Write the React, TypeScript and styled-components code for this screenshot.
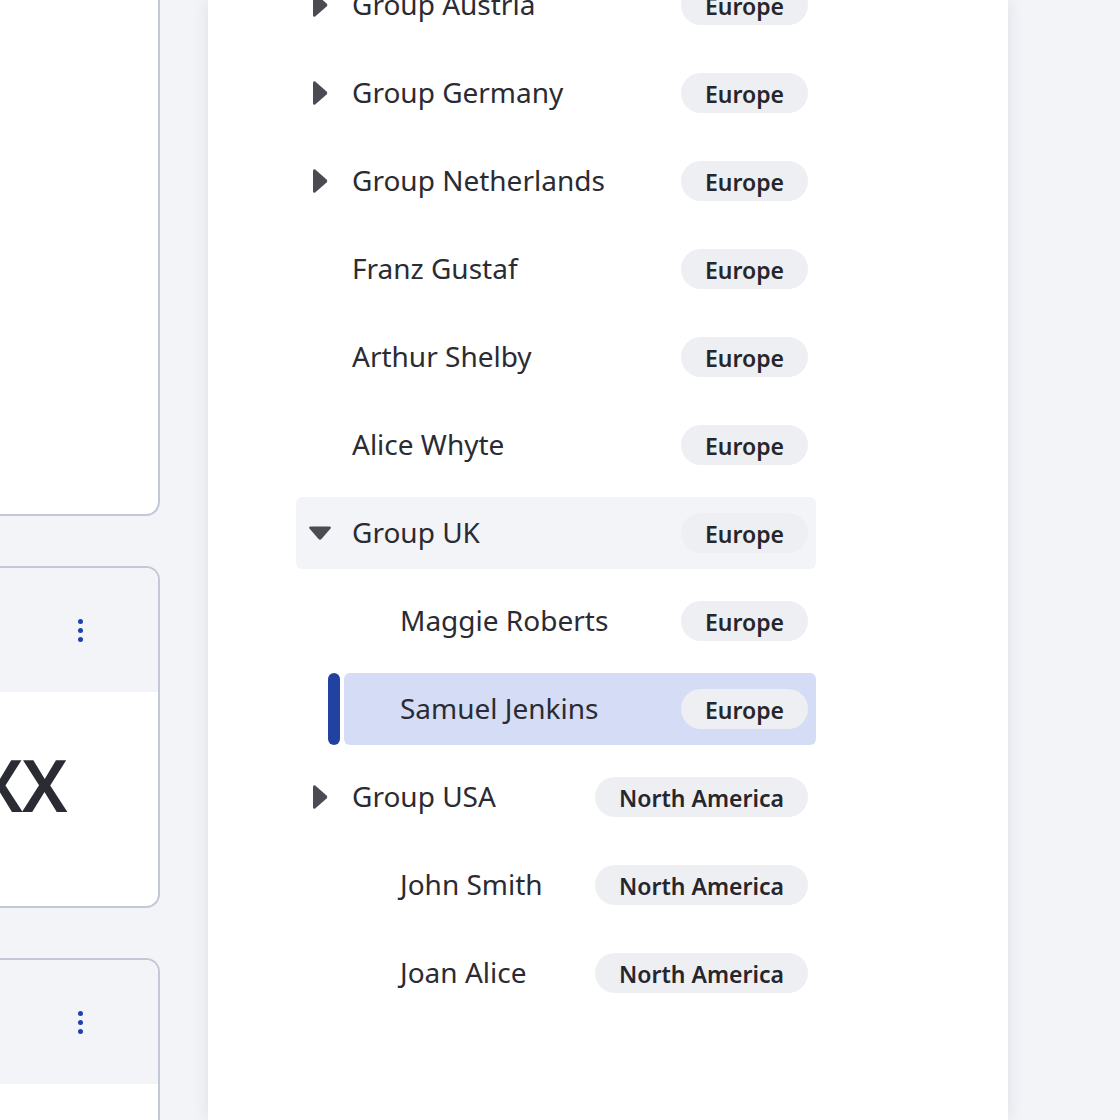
import React from "react";
import styled, { createGlobalStyle } from "styled-components";

const Global = createGlobalStyle`
  html, body { margin: 0; padding: 0; }
  body {
    background: #f3f4f8;
    font-family: "Noto Sans", "Open Sans", sans-serif;
    color: #2b2b33;
    overflow: hidden;
  }
`;

const Page = styled.div`
  display: flex;
  width: 1120px;
  height: 1120px;
  overflow: hidden;
  gap: 48px;
`;

const CardColumn = styled.div`
  display: flex;
  flex-direction: column;
  gap: 50px;
  width: 200px;
  margin-left: -40px;
  flex-shrink: 0;
`;

const Card = styled.div<{ $height: number; $offset?: number }>`
  height: ${(p) => p.$height}px;
  margin-top: ${(p) => p.$offset ?? 0}px;
  border: 2px solid #c3c8d8;
  border-radius: 14px;
  background: #ffffff;
  box-sizing: border-box;
  overflow: hidden;
  display: flex;
  flex-direction: column;
  flex-shrink: 0;
`;

const CardLines = styled.div`
  display: flex;
  flex-direction: column;
  align-items: flex-start;
  padding-top: 185px;
  gap: 44px;
  margin-left: -12px;
  font-size: 27px;
  line-height: 36px;
  color: #2b2b33;
`;

const CardHeader = styled.div`
  height: 124px;
  background: #f3f4f8;
  display: flex;
  align-items: center;
  justify-content: flex-end;
  padding-right: 75px;
  flex-shrink: 0;
`;

const Kebab = styled.div`
  display: flex;
  flex-direction: column;
  gap: 4px;
`;

const Dot = styled.span`
  width: 5px;
  height: 5px;
  border-radius: 50%;
  background: #2142a8;
`;

const BigValue = styled.div`
  font-size: 72px;
  font-weight: 600;
  line-height: 1;
  padding-top: 56px;
  margin-left: -30px;
  color: #2b2b33;
  letter-spacing: -1px;
`;

const Panel = styled.div`
  width: 800px;
  flex-shrink: 0;
  background: #ffffff;
  box-shadow: 0 0 16px rgba(40, 44, 70, 0.1);
  padding-left: 88px;
  box-sizing: border-box;
`;

const Tree = styled.ul`
  list-style: none;
  margin: -31px 0 0 0;
  padding: 0;
  width: 520px;
  display: flex;
  flex-direction: column;
  gap: 16px;
`;

const Item = styled.li<{ $level: number }>`
  position: relative;
  margin-left: ${(p) => p.$level * 48}px;
`;

const Row = styled.div<{ $variant: "plain" | "open" | "selected" }>`
  height: 72px;
  display: flex;
  align-items: center;
  padding: 0 8px 0 12px;
  border-radius: 6px;
  background: ${(p) =>
    p.$variant === "selected" ? "#d4ddf5" : p.$variant === "open" ? "#f3f4f8" : "transparent"};
`;

const SelectBar = styled.span`
  position: absolute;
  left: -16px;
  top: 0;
  width: 12px;
  height: 72px;
  border-radius: 6px;
  background: #2142a0;
`;

const IconSlot = styled.span`
  width: 24px;
  height: 24px;
  display: flex;
  align-items: center;
  justify-content: center;
  flex-shrink: 0;
  margin-right: 20px;
  color: #4b4b53;
`;

const Label = styled.span`
  flex: 1;
  font-size: 28px;
  line-height: 36px;
  color: #2b2b33;
  white-space: nowrap;
  margin-top: -2px;
`;

const Badge = styled.span`
  height: 40px;
  box-sizing: border-box;
  padding: 2px 24px 0;
  border-radius: 20px;
  background: #eeeff3;
  display: flex;
  align-items: center;
  font-size: 23px;
  font-weight: 600;
  color: #26262d;
  white-space: nowrap;
`;

const CaretRight = () => (
  <svg width="16" height="26" viewBox="0 0 16 26">
    <path d="M3.2 1.6 Q1 0.4 1 3 V23 Q1 25.6 3.2 24.4 L14.6 14.6 Q16 13 14.6 11.4 Z" fill="#4b4b53" />
  </svg>
);

const CaretDown = () => (
  <svg width="26" height="16" viewBox="0 0 26 16">
    <path d="M3 1 Q0.4 1 1.6 3.2 L11.4 14.6 Q13 16 14.6 14.6 L24.4 3.2 Q25.6 1 23 1 Z" fill="#4b4b53" />
  </svg>
);

type Node = {
  label: string;
  region: string;
  level: number;
  kind: "closed" | "open" | "leaf";
  selected?: boolean;
};

const nodes: Node[] = [
  { label: "Group Austria", region: "Europe", level: 0, kind: "closed" },
  { label: "Group Germany", region: "Europe", level: 0, kind: "closed" },
  { label: "Group Netherlands", region: "Europe", level: 0, kind: "closed" },
  { label: "Franz Gustaf", region: "Europe", level: 0, kind: "leaf" },
  { label: "Arthur Shelby", region: "Europe", level: 0, kind: "leaf" },
  { label: "Alice Whyte", region: "Europe", level: 0, kind: "leaf" },
  { label: "Group UK", region: "Europe", level: 0, kind: "open" },
  { label: "Maggie Roberts", region: "Europe", level: 1, kind: "leaf" },
  { label: "Samuel Jenkins", region: "Europe", level: 1, kind: "leaf", selected: true },
  { label: "Group USA", region: "North America", level: 0, kind: "closed" },
  { label: "John Smith", region: "North America", level: 1, kind: "leaf" },
  { label: "Joan Alice", region: "North America", level: 1, kind: "leaf" },
];

const KebabIcon = () => (
  <Kebab>
    <Dot />
    <Dot />
    <Dot />
  </Kebab>
);

export default function App() {
  return (
    <>
      <Global />
      <Page>
        <CardColumn>
          <Card $height={600} $offset={-84}>
            <CardLines>
              <span>xx</span>
              <span>xx</span>
            </CardLines>
          </Card>
          <Card $height={342}>
            <CardHeader>
              <KebabIcon />
            </CardHeader>
            <BigValue>XXX</BigValue>
          </Card>
          <Card $height={400}>
            <CardHeader>
              <KebabIcon />
            </CardHeader>
          </Card>
        </CardColumn>
        <Panel>
          <Tree>
            {nodes.map((n) => (
              <Item key={n.label} $level={n.level}>
                {n.selected && <SelectBar />}
                <Row $variant={n.selected ? "selected" : n.kind === "open" ? "open" : "plain"}>
                  <IconSlot>
                    {n.kind === "closed" && <CaretRight />}
                    {n.kind === "open" && <CaretDown />}
                  </IconSlot>
                  <Label>{n.label}</Label>
                  <Badge>{n.region}</Badge>
                </Row>
              </Item>
            ))}
          </Tree>
        </Panel>
      </Page>
    </>
  );
}
